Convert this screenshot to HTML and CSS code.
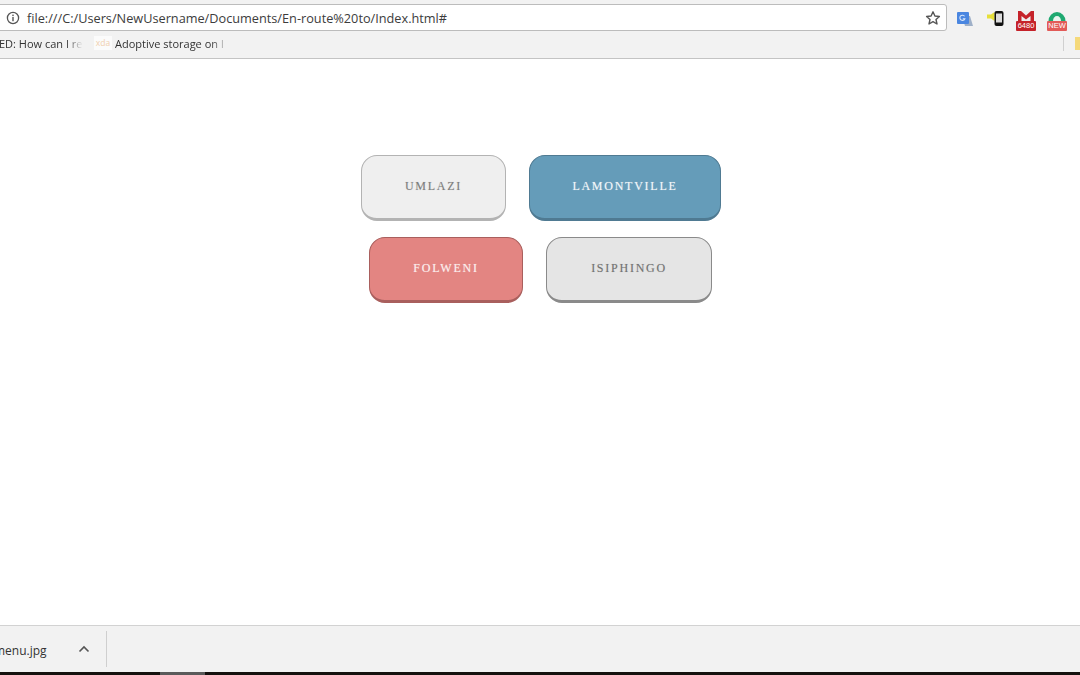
FILE: index.html
```html
<!DOCTYPE html>
<html lang="en">
<head>
<meta charset="utf-8">
<title>En-route to</title>
<link rel="stylesheet" href="styles.css">
</head>
<body>
<div class="page">
  <header class="toolbar">
    <div class="omnibox">
      <svg class="info" viewBox="0 0 14 14" width="14" height="14"><circle cx="7" cy="7" r="5.6" fill="none" stroke="#555" stroke-width="1.3"/><rect x="6.3" y="6" width="1.4" height="4.2" fill="#555"/><rect x="6.3" y="3.6" width="1.4" height="1.5" fill="#555"/></svg>
      <span class="url">file:///C:/Users/NewUsername/Documents/En-route%20to/Index.html#</span>
      <svg class="star" viewBox="0 0 16 16" width="16" height="16"><path d="M8 1.8l1.9 4.2 4.5.5-3.4 3 1 4.5L8 11.6 4 14l1-4.5-3.4-3 4.5-.5z" fill="none" stroke="#555" stroke-width="1.4" stroke-linejoin="round"/></svg>
    </div>
    <div class="extensions">
      <svg class="ext ext-translate" viewBox="0 0 18 14" width="18" height="14"><path d="M6 4h8l3 10H9z" fill="#9fb0c8"/><rect x="1" y="0" width="12" height="12" rx="1" fill="#4a86e0"/><path d="M8.600 4.300a2.600 2.600 0 1 0 .3 2.400H6.800" fill="none" stroke="#d8e6fa" stroke-width="1.100"/></svg>
      <svg class="ext ext-phone" viewBox="0 0 17 15" width="17" height="15"><path d="M0 3.500h4l3.500-2.500v9L4 7.500H0z" fill="#e6df3a"/><rect x="7.500" y="0" width="9" height="15" rx="2" fill="#111"/><rect x="9" y="2.500" width="6" height="9" fill="#dcdcdc"/></svg>
      <span class="ext ext-badged ext-gmail">
        <svg viewBox="0 0 20 10" width="20" height="10"><path d="M2 0h16v10H2z" fill="#eee"/><path d="M2 0h3l5 4.500L15 0h3v10h-3.500V5L10 8.500 5.500 5v5H2z" fill="#c5222a"/></svg>
        <span class="badge badge-dark">6480</span>
      </span>
      <span class="ext ext-badged">
        <svg viewBox="0 0 20 10" width="20" height="10"><path d="M1.500 10a8.500 9 0 0 1 17 0z" fill="#1fa971"/><path d="M6 10a4 5 0 0 1 8 0z" fill="#e9f5ef"/></svg>
        <span class="badge badge-light">NEW</span>
      </span>
    </div>
  </header>
  <nav class="bookmarks">
    <span class="mark mark-first">ED: How can I re</span>
    <span class="mark-icon">xda</span>
    <span class="mark mark-second">Adoptive storage on l</span>
    <span class="bar-end"><span class="divider"></span><span class="folder"></span></span>
  </nav>
  <main class="content">
    <div class="row row-one">
      <a class="btn btn-umlazi" href="#">UMLAZI</a>
      <a class="btn btn-lamontville" href="#">LAMONTVILLE</a>
    </div>
    <div class="row row-two">
      <a class="btn btn-folweni" href="#">FOLWENI</a>
      <a class="btn btn-isiphingo" href="#">ISIPHINGO</a>
    </div>
  </main>
  <footer class="downloads">
    <span class="file">menu.jpg</span>
    <svg class="chevron" viewBox="0 0 12 8" width="12" height="8"><path d="M1.500 6.500L6 2l4.500 4.500" fill="none" stroke="#555" stroke-width="1.600"/></svg>
    <span class="sep"></span>
  </footer>
  <div class="desktop"></div>
</div>
</body>
</html>
```
FILE: styles.css
```css
* { box-sizing: border-box; }
html, body { margin: 0; padding: 0; background: #fff; }
.page {
  width: 1080px;
  height: 675px;
  overflow: hidden;
  display: flex;
  flex-direction: column;
  font-family: "Open Sans", "Liberation Sans", sans-serif;
}
.toolbar {
  height: 32px;
  background: #f2f2f2;
  display: flex;
  align-items: flex-start;
  flex: none;
}
.omnibox {
  width: 953px;
  height: 27px;
  margin: 4px 0 0 -6px;
  padding: 0 5px 0 11px;
  background: #fff;
  border: 1px solid #bcbcbc;
  border-radius: 3px;
  display: flex;
  align-items: center;
  gap: 7px;
  flex: none;
}
.url {
  flex: 1;
  font-size: 12.720px;
  color: #3c3c3c;
  white-space: nowrap;
}
.extensions {
  display: flex;
  align-items: flex-start;
  margin: 11px 0 0 9px;
  gap: 11px;
}
.ext { display: block; flex: none; }
.ext-badged {
  display: flex;
  flex-direction: column;
  align-items: center;
  width: 20px;
}
.ext-translate { margin-top: 1px; }
.ext-phone { margin-left: 2px; }
.ext-gmail { margin-left: 1px; }
.ext-badged svg { display: block; }
.badge {
  display: block;
  width: 20px;
  height: 10px;
  font-family: "Liberation Sans", sans-serif;
  font-size: 7.500px;
  line-height: 10px;
  text-align: center;
  color: #fff;
  border-radius: 1px;
}
.badge-dark { background: #c5222a; }
.badge-light { background: #e25b58; }
.bookmarks {
  height: 27px;
  flex: none;
  background: #f2f2f2;
  border-bottom: 1px solid #c4c4c4;
  display: flex;
  align-items: center;
  font-size: 11px;
  color: #333;
  padding-bottom: 4px;
  white-space: nowrap;
}
.mark { display: block; }
.mark-first {
  margin-left: -1px;
  width: 84px;
  -webkit-mask-image: linear-gradient(to right, #000 80%, transparent);
  mask-image: linear-gradient(to right, #000 80%, transparent);
}
.mark-icon {
  width: 18px;
  height: 14px;
  margin-left: 11px;
  background: #fbfbfb;
  color: #f0cfae;
  font-size: 8.500px;
  line-height: 14px;
  text-align: center;
}
.mark-second {
  margin-left: 3px;
  width: 114px;
  -webkit-mask-image: linear-gradient(to right, #000 84%, transparent);
  mask-image: linear-gradient(to right, #000 84%, transparent);
}
.bar-end {
  margin-left: auto;
  display: flex;
  align-items: center;
  gap: 11px;
}
.divider { width: 1px; height: 15px; background: #d0d0d0; }
.folder { width: 5px; height: 13px; background: #f5d97a; }
.content {
  flex: 1;
  background: #fff;
  padding-top: 96px;
  display: flex;
  flex-direction: column;
  align-items: center;
  gap: 16px;
}
.row { display: flex; gap: 23px; }
.row-one { margin-left: 2px; }
.row-two { margin-left: 1px; }
.btn {
  display: flex;
  align-items: center;
  justify-content: center;
  height: 66px;
  border-radius: 16px;
  font-family: "Liberation Serif", serif;
  font-size: 12px;
  letter-spacing: 1.750px;
  text-decoration: none;
  padding-bottom: 1px;
  border: 1px solid;
  border-bottom-width: 3px;
}
.btn-umlazi {
  width: 145px;
  background: #efefef;
  border-color: #b3b3b3;
  color: #7c7c7c;
  text-shadow: 0 0 1px rgba(120, 120, 120, .3);
}
.btn-lamontville {
  width: 192px;
  background: #659cb9;
  border-color: #4f7a92;
  color: #f2f6f9;
  text-shadow: 0 0 1px rgba(255, 255, 255, .45);
}
.btn-folweni {
  width: 154px;
  background: #e38582;
  border-color: #a95f5d;
  color: #fbeeee;
  text-shadow: 0 0 1px rgba(255, 255, 255, .45);
}
.btn-isiphingo {
  width: 166px;
  background: #e5e5e5;
  border-color: #8a8a8a;
  color: #727272;
  text-shadow: 0 0 1px rgba(110, 110, 110, .3);
}
.downloads {
  height: 47px;
  flex: none;
  background: #f2f2f2;
  border-top: 1px solid #d2d2d2;
  display: flex;
  align-items: center;
  font-size: 12px;
  color: #333;
}
.file { margin: 3px 0 0 -6px; }
.chevron { margin-left: 31px; }
.sep { width: 1px; height: 36px; margin-left: 16px; background: #cfcfcf; }
.desktop {
  height: 3px;
  flex: none;
  background: linear-gradient(to right, #15110e 0 160px, #5a5a5a 160px 205px, #15110e 205px);
}
```
